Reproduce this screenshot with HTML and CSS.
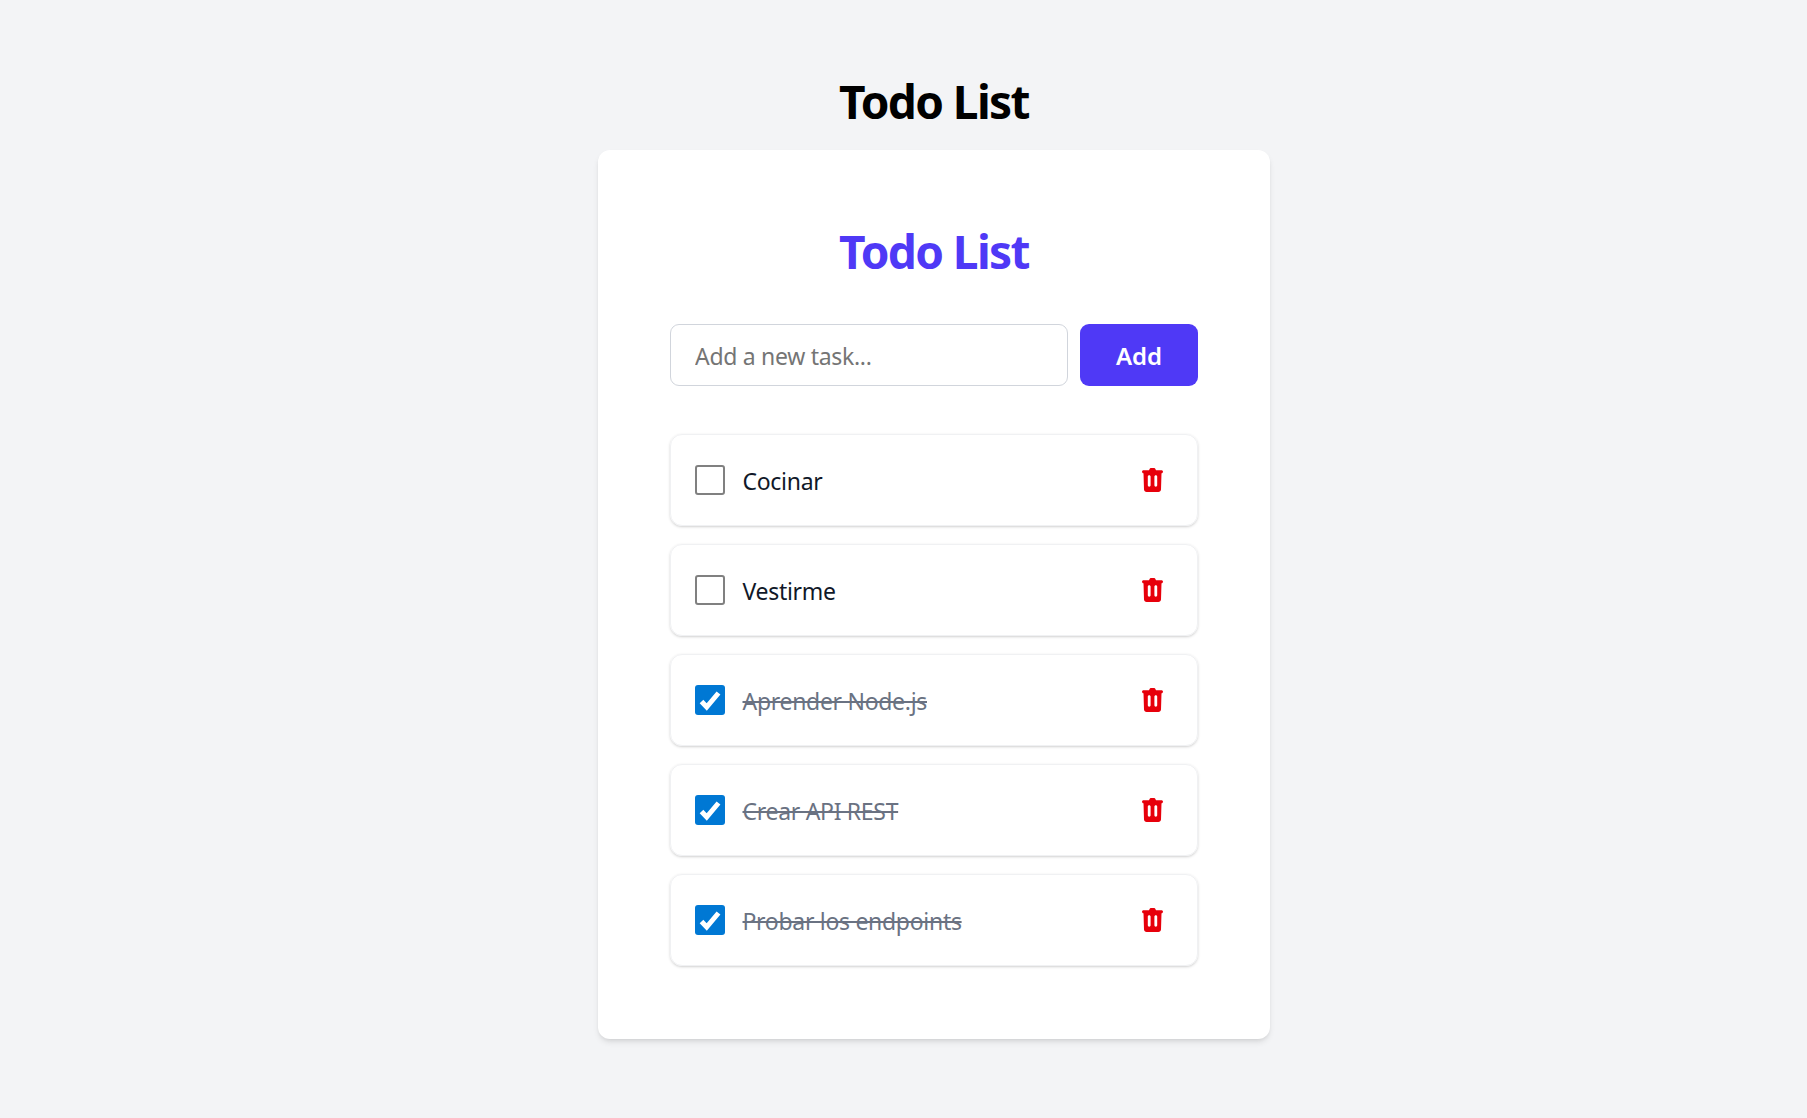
FILE: index.html
```html
<!DOCTYPE html>
<html lang="en">
<head>
<meta charset="utf-8">
<title>Todo List</title>
<link rel="stylesheet" href="styles.css">
</head>
<body>
<svg class="defs" width="0" height="0" aria-hidden="true">
  <symbol id="trash" viewBox="0 0 21 24">
    <path fill-rule="evenodd" d="M7 2.300 7.600.900C7.800.400 8.300 0 8.900 0h3.200c.6 0 1.100.4 1.300.9L14 2.300h5.500c.8 0 1.500.7 1.500 1.500s-.7 1.500-1.500 1.500L19 21.500c-.1 1.400-1.200 2.500-2.600 2.500H4.600c-1.400 0-2.500-1.100-2.600-2.500L1.500 5.300C.7 5.300 0 4.600 0 3.800s.7-1.500 1.500-1.500zM7.200 7.300c-.8 0-1.400.6-1.400 1.400v8.600c0 .8.6 1.400 1.400 1.400s1.400-.6 1.400-1.400V8.700c0-.8-.6-1.400-1.400-1.400zm6.600 0c-.8 0-1.400.6-1.400 1.400v8.600c0 .8.6 1.400 1.400 1.400s1.400-.6 1.400-1.400V8.700c0-.8-.6-1.400-1.400-1.400z"/>
  </symbol>
  <symbol id="tick" viewBox="0 0 30 30">
    <polyline points="6.500,16.500 11.700,22 23.500,8"/>
  </symbol>
</svg>
<h1 class="page-title">Todo List</h1>
<main class="card">
  <h2 class="card-title">Todo List</h2>
  <form class="add-form">
    <input class="task-input" type="text" placeholder="Add a new task...">
    <button class="add-btn" type="button">Add</button>
  </form>
  <ul class="todo-list">
    <li class="todo">
      <span class="box"></span>
      <span class="label">Cocinar</span>
      <svg class="trash"><use href="#trash"/></svg>
    </li>
    <li class="todo">
      <span class="box"></span>
      <span class="label">Vestirme</span>
      <svg class="trash"><use href="#trash"/></svg>
    </li>
    <li class="todo done">
      <span class="box checked"><svg class="tick"><use href="#tick"/></svg></span>
      <span class="label">Aprender Node.js</span>
      <svg class="trash"><use href="#trash"/></svg>
    </li>
    <li class="todo done">
      <span class="box checked"><svg class="tick"><use href="#tick"/></svg></span>
      <span class="label">Crear API REST</span>
      <svg class="trash"><use href="#trash"/></svg>
    </li>
    <li class="todo done">
      <span class="box checked"><svg class="tick"><use href="#tick"/></svg></span>
      <span class="label">Probar los endpoints</span>
      <svg class="trash"><use href="#trash"/></svg>
    </li>
  </ul>
</main>
</body>
</html>
```

FILE: styles.css
```css
* { box-sizing: border-box; }
html, body { height: 100%; }
body {
  margin: 0;
  padding: 65px 0 0 61px;
  background: #f3f4f6;
  font-family: "Noto Sans", "Open Sans", sans-serif;
  display: flex;
  flex-direction: column;
  align-items: center;
}
.defs { position: absolute; }
.page-title, .card-title {
  margin: 0;
  font-size: 46px;
  font-weight: 700;
  letter-spacing: -1.6px;
  text-align: center;
}
.page-title { line-height: 72px; margin-bottom: 13px; color: #000; }
.card {
  width: 672px;
  height: 889px;
  padding: 71px 72px 72px;
  background: #fff;
  border-radius: 12px;
  box-shadow: 0 4px 6px -1px rgba(0,0,0,.1), 0 2px 4px -2px rgba(0,0,0,.1);
}
.card-title { line-height: 60px; margin-bottom: 43px; color: #4f39f6; }
.add-form { display: flex; gap: 12px; margin-bottom: 48px; }
.task-input {
  flex: 1;
  min-width: 0;
  height: 62px;
  padding: 2px 24px 0;
  border: 1.5px solid #d1d5dc;
  border-radius: 9px;
  outline: none;
  font: 23px "Noto Sans", "Open Sans", sans-serif;
  letter-spacing: -.3px;
  color: #101828;
}
.task-input::placeholder { color: #757575; opacity: 1; }
.add-btn {
  width: 118px;
  height: 62px;
  border: none;
  border-radius: 9px;
  background: #4f39f6;
  color: #fff;
  font: 600 24px "Noto Sans", "Open Sans", sans-serif;
}
.todo-list {
  list-style: none;
  margin: 0;
  padding: 0;
  display: flex;
  flex-direction: column;
  gap: 18.3px;
}
.todo {
  display: flex;
  align-items: center;
  height: 91.7px;
  padding: 0 34.5px 0 24px;
  border: 1.5px solid #f0f1f3;
  border-radius: 12px;
  box-shadow: 0 1px 3px 0 rgba(0,0,0,.16), 0 1px 2px -1px rgba(0,0,0,.1);
}
.box {
  flex: none;
  width: 30px;
  height: 30px;
  border: 2px solid #808080;
  border-radius: 3px;
  background: #fff;
}
.box.checked { border: none; background: #0078d4; }
.tick { display: block; width: 30px; height: 30px; fill: none; stroke: #fff; stroke-width: 5; }
.label {
  flex: 1;
  margin-left: 17.500px;
  padding-top: 3px;
  font-size: 23px;
  letter-spacing: -.3px;
  line-height: 36px;
  color: #101828;
}
.done .label { color: #6a7282; text-decoration: line-through; }
.trash { flex: none; width: 21px; height: 24px; margin-top: 1px; fill: #e7000b; }
```
